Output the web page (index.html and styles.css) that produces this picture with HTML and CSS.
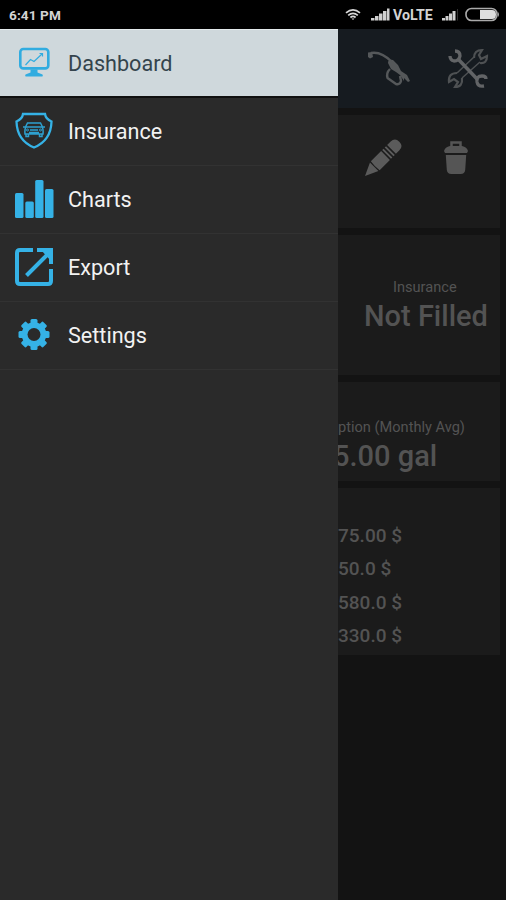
FILE: index.html
```html
<!DOCTYPE html>
<html lang="en">
<head>
<meta charset="utf-8">
<title>Dashboard</title>
<link rel="stylesheet" href="styles.css">
</head>
<body>
<header class="status">
  <span class="time">6:41 PM</span>
  <svg class="wifi" width="16" height="13" viewBox="0 0 16 13" fill="none" stroke="#d8d8d8" stroke-width="1.7"><path d="M1 4.800Q8-.9 15 4.800M3.200 7.300q4.800-4 9.600 0M5.400 9.500q2.600-2.200 5.200 0"/><path d="M6.500 10.500L8 12l1.500-1.500Z" fill="#d8d8d8" stroke="none"/></svg>
  <svg class="signal" width="19" height="13" viewBox="0 0 19 13" fill="#d0d0d0"><path d="M0 10h3.500v2.500H0zM4 8h3.500v4.500H4zM8 5.500h3.500v7H8zM12 3h3.500v9.500H12zM16 .5h2.500v12H16z"/></svg>
  <span class="volte">VoLTE</span>
  <svg class="signal2" width="17" height="13" viewBox="0 0 17 13" fill="#d0d0d0"><path d="M0 10h3v2.500H0zM3.500 8h3v4.500h-3zM7 5.500h3v7H7zM10.500 3h3v9.500h-3z"/><path d="M15 1h1v11.500h-1z" fill="#333"/></svg>
  <svg class="battery" width="35" height="15" viewBox="0 0 35 15"><rect x="1" y="1.500" width="31" height="12" rx="5.500" fill="#000" stroke="#aaa" stroke-width="1.600"/><path d="M15 3h12q4 0 4 4.500T27 12H15z" fill="#dedede"/><path d="M33 5q2 2.500 0 5z" fill="#aaa"/></svg>
</header>
<div class="screen">
  <nav class="drawer">
    <a class="item active">
      <svg width="40" height="40" viewBox="0 0 40 40" fill="none" stroke="#31ace0"><rect x="6.300" y="6" width="28" height="19.400" rx="3" stroke-width="2.600"/><path d="M11.500 22l5-5.500 3.500 2 8.500-8M25.500 10.500h3v3" stroke-width="1.200"/><path d="M16.500 26.500h7v3l5 2q1 2-1 2h-15q-2 0-1-2l5-2z" fill="#31ace0" stroke="none"/></svg>
      <span>Dashboard</span></a>
    <a class="item">
      <svg width="40" height="40" viewBox="0 0 40 40" fill="none" stroke="#35b2e6"><path d="M9 2h22q.7 5 6.500 7.500Q37 28.500 20 35.500 3 28.500 2.500 9.500 8.300 7 9 2Z" stroke-width="2.300"/><g stroke="#2ea0cf"><path d="M11.500 15l2-4h13l2 4zM9 15h3M28 15h3M12 15q-1.500 2-1 7h18q.5-5-1-7M12 22v2.500h2.500V22M25.500 22v2.500H28V22M16 18h8M15 20.500h10" stroke-width="1.500"/><circle cx="13.500" cy="18" r="1"/><circle cx="26.500" cy="18" r="1"/></g></svg>
      <span>Insurance</span></a>
    <a class="item">
      <svg width="40" height="40" viewBox="0 0 40 40" fill="#35b2e6"><rect x="1" y="13" width="8.500" height="25" rx="1.500"/><rect x="11.300" y="21.500" width="8.500" height="16.500" rx="1.500"/><rect x="21.200" y="0" width="8.300" height="38" rx="1.500"/><rect x="31" y="9" width="8.500" height="29" rx="1.500"/></svg>
      <span>Charts</span></a>
    <a class="item">
      <svg width="40" height="40" viewBox="0 0 40 40" fill="none" stroke="#35b2e6" stroke-width="4"><g transform="translate(0 -1)"><path d="M19 3H6Q3 3 3 6v28q0 3 3 3h28q3 0 3-3V22"/><path d="M12.500 28.500L36 5"/><path d="M23 3h14v14"/><path d="M27 3h10v11z" fill="#35b2e6" stroke="none"/></g></svg>
      <span>Export</span></a>
    <a class="item">
      <svg width="40" height="40" viewBox="0 0 40 40"><g fill="#35b2e6" transform="translate(0 -.8)"><rect x="16.500" y="3.800" width="7" height="31" rx="1.500"/><rect x="16.500" y="3.800" width="7" height="31" rx="1.500" transform="rotate(45 20 19.300)"/><rect x="16.500" y="3.800" width="7" height="31" rx="1.500" transform="rotate(90 20 19.300)"/><rect x="16.500" y="3.800" width="7" height="31" rx="1.500" transform="rotate(135 20 19.300)"/><circle cx="20" cy="19.300" r="12.300"/></g><circle cx="20" cy="18.500" r="6.500" fill="#2a2a2a"/></svg>
      <span>Settings</span></a>
  </nav>
  <main class="content">
    <div class="toolbar">
      <svg class="fuel" width="44" height="38" viewBox="0 0 44 38" fill="none" stroke="#55585a"><path d="M4 3Q14 1 25 12" stroke-width="2.400"/><path d="M1 2.500l4-.5 1 5-3 1.500-2-1.500z" fill="#55585a" stroke="none"/><path d="M21 13q0-4 5-3l5 5 3 6 6 4 3 6-2 1-4-4 0 3-4-6-4-3-5-3z" fill="#55585a" stroke="none"/><path d="M23 19q-4 4-2.500 9l8.500 6q4 1 5-3l-1-5" stroke-width="2.400" stroke-linejoin="round"/></svg>
      <svg class="tools" width="42" height="42" viewBox="0 0 42 42" fill="none"><g stroke="#4e5153" stroke-width="1.500"><path d="M15 30L33 14M10 25L27 9"/><path d="M27 10q0-8 8-8l-3 5 2 4 6-3q0 8-7 7M10 25q-9 0-8 9l5-3 4 3-3 5q8 0 7-9" stroke-width="2.200"/></g><g stroke="#626466"><path d="M12 12l19 20" stroke-width="3.500"/><path d="M8 3q5 0 5 5-1 5-6 5-4-1-4-5M37 38q-6 1-7-4-1-6 5-6 4 0 4 3" stroke-width="3.300"/></g></svg>
    </div>
    <section class="card actions">
      <svg width="38" height="38" viewBox="0 0 38 38" fill="#5b5b5b"><g transform="translate(0 37) rotate(-45)"><path d="M0 0L13-6V6zM14.500-6.200L29-6.200V6.200H14.500q-1.200-6.200 0-12.400zM30.500-6.200h2v12.400h-2zM34-6.200h2v12.400h-2zM37.500-6.200h5q6 0 6 6.200t-6 6.200h-5z"/></g></svg>
      <svg width="24" height="34" viewBox="0 0 24 34"><path d="M7.500 5V1.500h9V5" fill="none" stroke="#555" stroke-width="2.500"/><path d="M0 10q1-4 6-5h12q5 1 6 5l-1 2H1zM1.800 14h20.400l-1 15q-.5 4-4.500 4H7.300q-4 0-4.500-4z" fill="#555"/></svg>
    </section>
    <section class="card insurance"><p class="label">Insurance</p><p class="value">Not Filled</p></section>
    <section class="card usage"><p class="label">ption (Monthly Avg)</p><p class="value">5.00 gal</p></section>
    <section class="card costs"><p>75.00 $</p><p>50.0 $</p><p>580.0 $</p><p>330.0 $</p></section>
  </main>
</div>
</body>
</html>
```
FILE: styles.css
```css
* { box-sizing: border-box; }
body { margin: 0; width: 506px; height: 900px; overflow: hidden; background: #000; font-family: Roboto, "Liberation Sans", sans-serif; }
p { margin: 0; white-space: nowrap; }
svg { display: block; flex: none; }
.status { height: 29px; display: flex; align-items: center; color: #d3d3d3; font-weight: 700; padding-left: 9px; }
.time { width: 336px; font-size: 13.6px; letter-spacing: .1px; }
.signal { margin-left: 10px; }
.volte { width: 41px; margin-left: 3px; font-size: 14.2px; white-space: nowrap; }
.signal2 { margin-left: 8px; }
.battery { margin-left: 6px; }
.screen { height: 871px; display: flex; }
.drawer { width: 338px; flex: none; background: #2a2a2a; }
.item { height: 68px; display: flex; align-items: center; gap: 14px; padding-left: 14px; border-bottom: 1px solid #323232; color: #f2f2f2; font-size: 21.6px; }
.item.active { height: 69px; background: #cfd8dc; color: #34444d; border-top: 1px solid #e4eaec; border-bottom: 2px solid #101010; }
.content { width: 168px; flex: none; overflow: hidden; background: #131313; }
.toolbar { height: 79px; background: #161b20; display: flex; align-items: center; padding-left: 29px; gap: 36px; }
.card { width: 162px; background: #1b1b1b; color: #535353; }
.actions { height: 113px; margin-top: 7px; padding: 24px 0 0 27px; display: flex; gap: 41px; }
.actions svg + svg { margin-top: 2px; }
.insurance { height: 140px; margin-top: 7px; padding: 43px 0 0 26px; }
.insurance .label { padding-left: 29px; }
.label { font-size: 14.6px; line-height: 18px; font-weight: 400; }
.value { font-size: 29px; line-height: 40px; font-weight: 500; }
.usage { height: 99px; margin-top: 7px; padding-top: 36px; }
.usage .value { margin-left: -5px; }
.costs { height: 167px; margin-top: 7px; padding-top: 31px; font-size: 19px; line-height: 33.3px; font-weight: 500; }
```
